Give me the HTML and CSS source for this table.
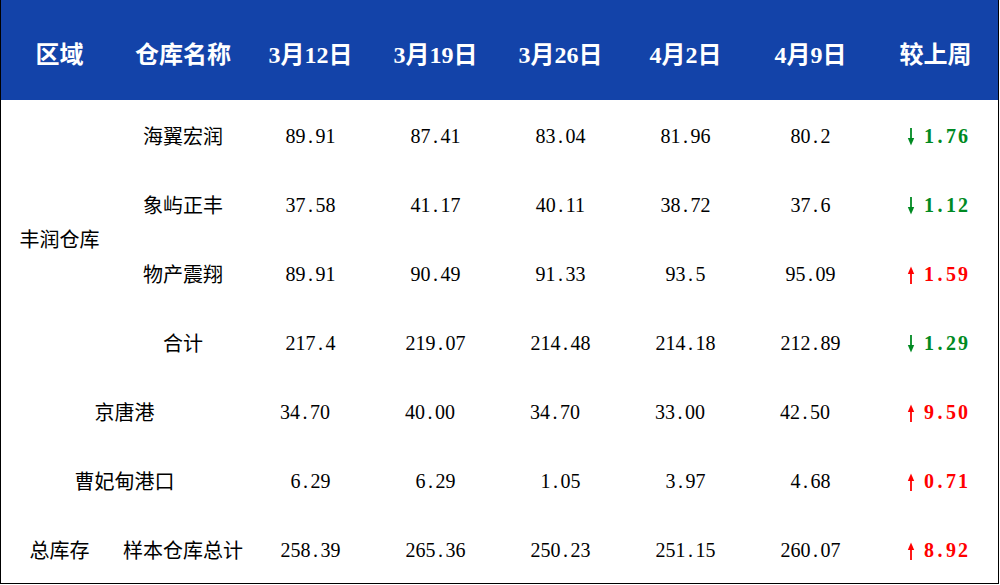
FILE: index.html
```html
<!DOCTYPE html>
<html lang="zh">
<head>
<meta charset="utf-8">
<title>仓库库存</title>
<link rel="stylesheet" href="styles.css">
</head>
<body>
<div class="frame">
<table class="tbl">
  <colgroup>
    <col class="c0"><col class="c1"><col class="cd"><col class="cd"><col class="cd"><col class="cd"><col class="cd"><col class="cd">
  </colgroup>
  <thead>
    <tr class="head">
      <th>区域</th><th>仓库名称</th><th>3月12日</th><th>3月19日</th><th>3月26日</th><th>4月2日</th><th>4月9日</th><th>较上周</th>
    </tr>
  </thead>
  <tbody>
    <tr>
      <td class="zh region" rowspan="4">丰润仓库</td>
      <td class="zh">海翼宏润</td>
      <td>89<span class="d">.</span>91</td><td>87<span class="d">.</span>41</td><td>83<span class="d">.</span>04</td><td>81<span class="d">.</span>96</td><td>80<span class="d">.</span>2</td>
      <td class="chg down"><svg class="arr" viewBox="0 0 8 18"><path d="M4 0V15" /><path class="hd" d="M0.8 10L4 17.5L7.2 10Z"/></svg>1<span class="d">.</span>76</td>
    </tr>
    <tr>
      <td class="zh">象屿正丰</td>
      <td>37<span class="d">.</span>58</td><td>41<span class="d">.</span>17</td><td>40<span class="d">.</span>11</td><td>38<span class="d">.</span>72</td><td>37<span class="d">.</span>6</td>
      <td class="chg down"><svg class="arr" viewBox="0 0 8 18"><path d="M4 0V15" /><path class="hd" d="M0.8 10L4 17.5L7.2 10Z"/></svg>1<span class="d">.</span>12</td>
    </tr>
    <tr>
      <td class="zh">物产震翔</td>
      <td>89<span class="d">.</span>91</td><td>90<span class="d">.</span>49</td><td>91<span class="d">.</span>33</td><td>93<span class="d">.</span>5</td><td>95<span class="d">.</span>09</td>
      <td class="chg up"><svg class="arr" viewBox="0 0 8 18"><path d="M4 3V18" /><path class="hd" d="M0.8 8L4 0.5L7.2 8Z"/></svg>1<span class="d">.</span>59</td>
    </tr>
    <tr>
      <td class="zh">合计</td>
      <td>217<span class="d">.</span>4</td><td>219<span class="d">.</span>07</td><td>214<span class="d">.</span>48</td><td>214<span class="d">.</span>18</td><td>212<span class="d">.</span>89</td>
      <td class="chg down"><svg class="arr" viewBox="0 0 8 18"><path d="M4 0V15" /><path class="hd" d="M0.8 10L4 17.5L7.2 10Z"/></svg>1<span class="d">.</span>29</td>
    </tr>
    <tr>
      <td class="zh" colspan="2">京唐港</td>
      <td class="sh">34<span class="d">.</span>70</td><td class="sh">40<span class="d">.</span>00</td><td class="sh">34<span class="d">.</span>70</td><td class="sh">33<span class="d">.</span>00</td><td class="sh">42<span class="d">.</span>50</td>
      <td class="chg up"><svg class="arr" viewBox="0 0 8 18"><path d="M4 3V18" /><path class="hd" d="M0.8 8L4 0.5L7.2 8Z"/></svg>9<span class="d">.</span>50</td>
    </tr>
    <tr>
      <td class="zh" colspan="2">曹妃甸港口</td>
      <td>6<span class="d">.</span>29</td><td>6<span class="d">.</span>29</td><td>1<span class="d">.</span>05</td><td>3<span class="d">.</span>97</td><td>4<span class="d">.</span>68</td>
      <td class="chg up"><svg class="arr" viewBox="0 0 8 18"><path d="M4 3V18" /><path class="hd" d="M0.8 8L4 0.5L7.2 8Z"/></svg>0<span class="d">.</span>71</td>
    </tr>
    <tr>
      <td class="zh">总库存</td>
      <td class="zh">样本仓库总计</td>
      <td>258<span class="d">.</span>39</td><td>265<span class="d">.</span>36</td><td>250<span class="d">.</span>23</td><td>251<span class="d">.</span>15</td><td>260<span class="d">.</span>07</td>
      <td class="chg up"><svg class="arr" viewBox="0 0 8 18"><path d="M4 3V18" /><path class="hd" d="M0.8 8L4 0.5L7.2 8Z"/></svg>8<span class="d">.</span>92</td>
    </tr>
  </tbody>
</table>
</div>
</body>
</html>
```

FILE: styles.css
```css
html, body {
  margin: 0;
  padding: 0;
  background: #ffffff;
}

.frame {
  width: 997px;
  border-left: 1px solid #000;
  border-right: 1px solid #000;
  border-bottom: 1px solid #000;
}

.tbl {
  width: 997px;
  border-collapse: collapse;
  table-layout: fixed;
  font-family: "Liberation Serif", "Noto Sans CJK SC", serif;
  font-size: 20px;
  color: #000;
}

.c0 { width: 117px; }
.c1 { width: 130px; }
.cd { width: 125px; }

.tbl th,
.tbl td {
  padding: 0;
  text-align: center;
  vertical-align: middle;
  white-space: nowrap;
}

.head {
  height: 100px;
  background: #1343a9;
}

.head th {
  color: #ffffff;
  font-size: 24px;
  font-weight: bold;
  font-family: "Liberation Serif", "Noto Sans CJK SC", serif;
  padding-top: 4px;
}

.tbl tbody tr {
  height: 69px;
}

.tbl tbody td {
  line-height: 22px;
  padding-top: 2px;
}

.zh {
  font-family: "Noto Sans CJK SC", sans-serif;
  font-size: 20px;
}

.d {
  display: inline-block;
  width: 10px;
  text-align: center;
}

.sh {
  padding-right: 11px !important;
}

.chg {
  font-weight: bold;
  letter-spacing: 2px;
  padding-left: 6px !important;
}

.chg .d {
  width: 10px;
}

.down { color: #008a22; }
.up { color: #ff0000; }

.arr {
  width: 8px;
  height: 18px;
  vertical-align: -3px;
  margin-right: 9px;
}

.arr path {
  stroke: currentColor;
  stroke-width: 1.8;
  fill: none;
}

.arr path.hd {
  fill: currentColor;
  stroke: none;
}
```
